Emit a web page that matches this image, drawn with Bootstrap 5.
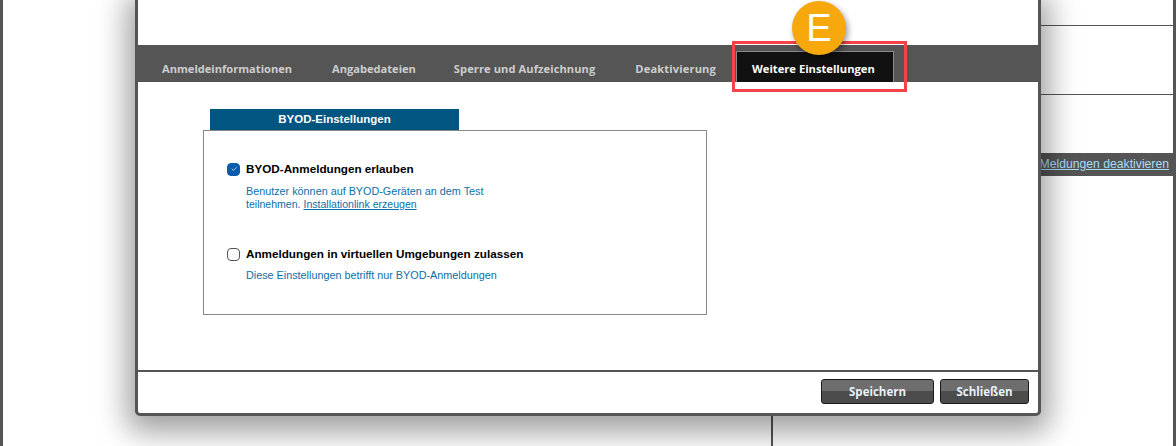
<!DOCTYPE html>
<html lang="de">
<head>
<meta charset="utf-8">
<title>BYOD-Einstellungen</title>
<link href="https://cdn.jsdelivr.net/npm/bootstrap@5.3.0/dist/css/bootstrap.min.css" rel="stylesheet">
<style>
html,body{height:446px;overflow:hidden;background:#fff;}
body{font-family:"Liberation Sans",Arial,sans-serif;position:relative;}
.page-frame{height:446px;border-left:3px solid #555;border-right:3px solid #555;}
.page-left{width:768px;}
.page-right{border-left:2px solid #555;}
.rrow{border-bottom:1px solid #555;}
.rrow-a{height:26px;}
.rrow-b{height:69px;}
.rrow-c{height:58px;border-bottom:0;}
.rbar{height:23px;background:#555;font-size:12.2px;line-height:23px;padding-right:4px;text-align:right;white-space:nowrap;}
.rbar a{color:#a6dcf5;}
.dlg{position:absolute;left:135px;top:-4px;width:906px;height:420px;background:#fff;border:3px solid #555;border-radius:0 0 5px 5px;box-shadow:0 8px 30px 8px rgba(0,0,0,.38);}
.dlg-top{height:46px;}
.tabbar{height:37px;background:#555;padding-left:4px;font-family:"Open Sans",sans-serif;font-weight:700;font-size:11.1px;}
.tabitem{color:#cdcdcd;padding:0 20px;height:31px;line-height:35px;margin-top:6px;white-space:nowrap;}
.tabitem.tight{padding-left:18px;letter-spacing:.09px;}
.tabitem.spaced{letter-spacing:.15px;}
.tabitem.on{background:#111;color:#fff;border:1px solid #8a8a8a;border-bottom:0;line-height:33px;padding:0 15px;font-size:11.2px;width:158px;}
.dlg-body{padding:27px 0 0 65px;}
.grp-title{width:249px;height:21px;margin-left:7px;background:#005581;color:#fff;font-weight:700;font-size:11.5px;line-height:21px;text-align:center;}
.grp-box{width:504px;height:185px;border:1px solid #888;padding:30px 0 0 23px;}
.opt-check{width:13px;height:13px;margin:0 6px 0 0;border-radius:3px;border:1px solid #555;background-color:#fafafa;}
.opt-check:checked{background-color:#0b5cad;border-color:#0b5cad;background-size:70%;background-image:url("data:image/svg+xml,%3csvg xmlns='http://www.w3.org/2000/svg' viewBox='0 0 20 20'%3e%3cpath fill='none' stroke='%23dbe9f7' stroke-linecap='round' stroke-linejoin='round' stroke-width='2' d='m5 10 3.5 3.5 7-7'/%3e%3c/svg%3e");}
.opt-label{font-weight:700;font-size:11.7px;line-height:16px;color:#000;}
.opt-help{font-size:10.8px;line-height:13px;color:#0b6fa8;margin:8px 0 0 19px;width:270px;}
.opt-help.near{margin-top:7px;}
.opt-help a{color:#0b6fa8;}
.help-line{font-size:10.55px;}
.opt-gap{height:35px;}
.dlg-foot{border-top:2px solid #555;height:43px;padding:7px 9px 0 0;gap:6px;}
.foot-btn{height:25px;padding:0;border:1px solid #1a1a1a;border-radius:3px;color:#e8f2fb;font-family:"Open Sans",sans-serif;font-weight:700;font-size:11.5px;line-height:23px;background:linear-gradient(#6e6e6e 0,#6e6e6e 50%,#4c4c4c 50%,#4c4c4c 100%);}
.foot-btn:hover{color:#fff;}
.btn-save{width:113px;}
.btn-close-dlg{width:89px;}
.hl-rect{position:absolute;left:732px;top:41px;width:175px;height:51px;border:3px solid #f4444a;}
.mark-e{position:absolute;left:792px;top:1px;width:54px;height:54px;border-radius:50%;background:#f6a80c;color:#fff;font-size:38px;line-height:54px;text-align:center;font-family:"Liberation Sans",sans-serif;box-shadow:2px 3px 6px rgba(0,0,0,.4);}
</style>
</head>
<body>
<div class="page-frame d-flex">
  <div class="page-left"></div>
  <div class="page-right flex-grow-1">
    <div class="rrow rrow-a"></div>
    <div class="rrow rrow-b"></div>
    <div class="rrow rrow-c"></div>
    <div class="rbar"><a href="#">Meldungen deaktivieren</a></div>
  </div>
</div>
<div class="dlg d-flex flex-column">
  <div class="dlg-top"></div>
  <div class="tabbar d-flex">
    <div class="tabitem">Anmeldeinformationen</div>
    <div class="tabitem">Angabedateien</div>
    <div class="tabitem tight">Sperre und Aufzeichnung</div>
    <div class="tabitem spaced">Deaktivierung</div>
    <div class="tabitem on">Weitere Einstellungen</div>
  </div>
  <div class="dlg-body flex-grow-1">
    <div class="grp-title">BYOD-Einstellungen</div>
    <div class="grp-box">
      <div class="d-flex align-items-center">
        <input class="form-check-input opt-check" type="checkbox" checked id="o1">
        <label class="opt-label" for="o1">BYOD-Anmeldungen erlauben</label>
      </div>
      <div class="opt-help">Benutzer können auf BYOD-Geräten an dem Test<br><span class="help-line">teilnehmen. <a href="#">Installationlink erzeugen</a></span></div>
      <div class="opt-gap"></div>
      <div class="d-flex align-items-center">
        <input class="form-check-input opt-check" type="checkbox" id="o2">
        <label class="opt-label" for="o2">Anmeldungen in virtuellen Umgebungen zulassen</label>
      </div>
      <div class="opt-help near">Diese Einstellungen betrifft nur BYOD-Anmeldungen</div>
    </div>
  </div>
  <div class="dlg-foot d-flex justify-content-end">
    <button type="button" class="btn foot-btn btn-save">Speichern</button>
    <button type="button" class="btn foot-btn btn-close-dlg">Schließen</button>
  </div>
</div>
<div class="hl-rect"></div>
<div class="mark-e">E</div>
<script src="https://cdn.jsdelivr.net/npm/bootstrap@5.3.0/dist/js/bootstrap.bundle.min.js"></script>
</body>
</html>
